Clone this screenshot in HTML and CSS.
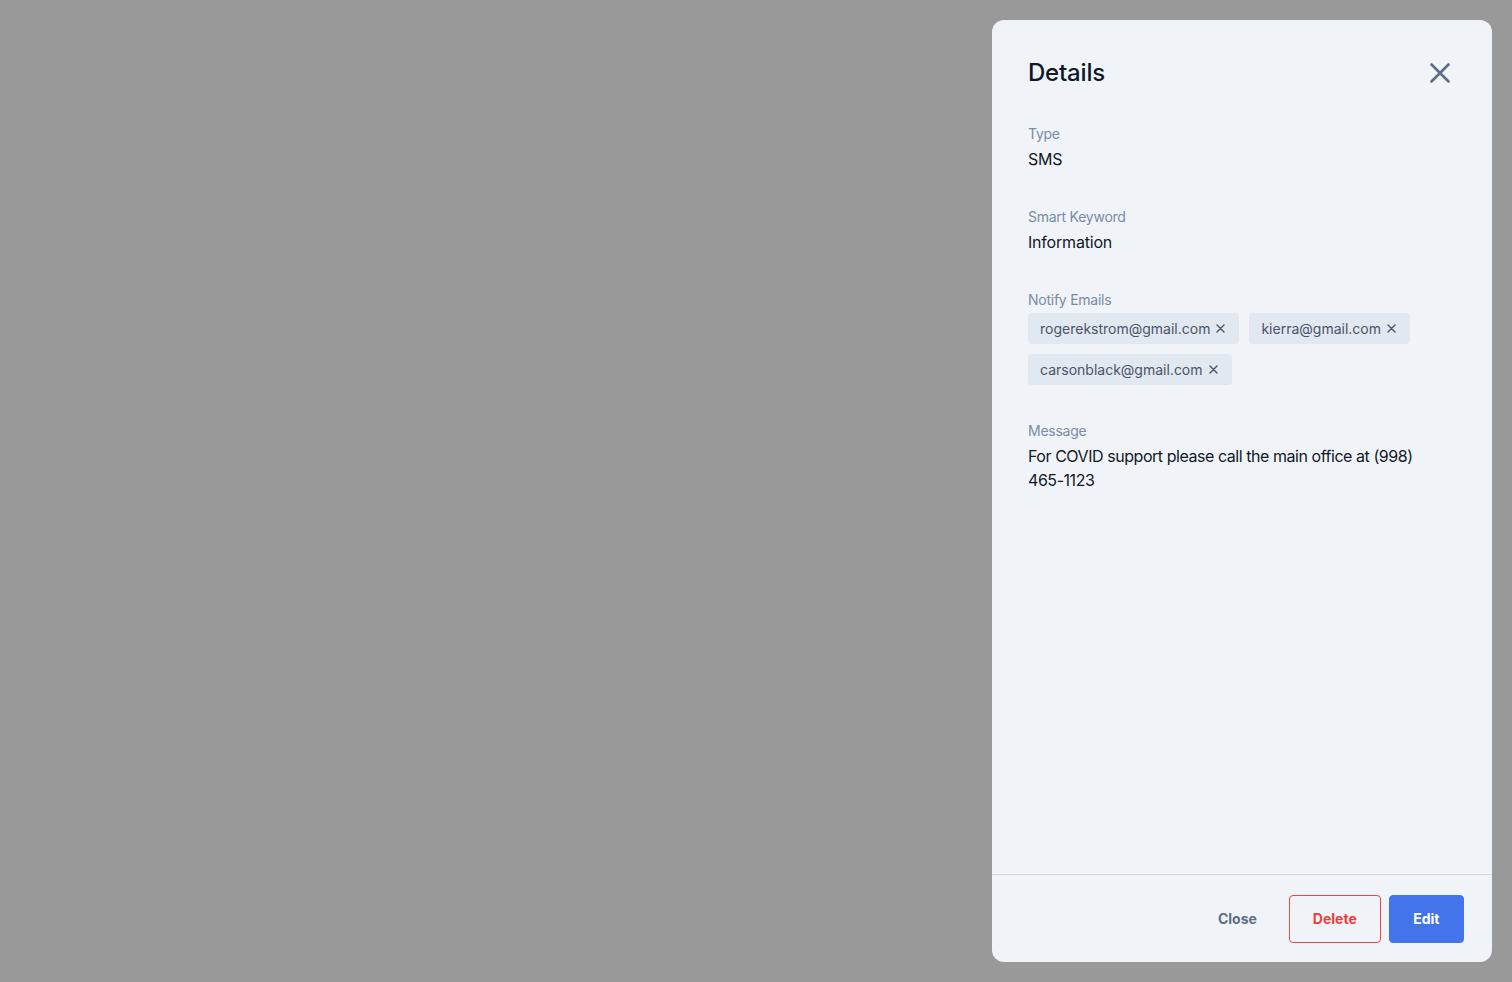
FILE: index.html
```html
<!DOCTYPE html>
<html lang="en">
<head>
<meta charset="utf-8">
<title>Details</title>
<link rel="stylesheet" href="styles.css">
</head>
<body>
<div class="backdrop">
  <aside class="panel">
    <div class="panel-body">
      <header class="panel-header">
        <h1 class="title">Details</h1>
        <button class="icon-btn" aria-label="Close">
          <svg width="20" height="20" viewBox="0 0 20 20" fill="none" stroke="currentColor" stroke-width="2.6" stroke-linecap="round"><path d="M1.5 1.5 18.5 18.5M18.5 1.5 1.5 18.5"/></svg>
        </button>
      </header>
      <section class="field">
        <div class="label">Type</div>
        <div class="value">SMS</div>
      </section>
      <section class="field">
        <div class="label">Smart Keyword</div>
        <div class="value">Information</div>
      </section>
      <section class="field">
        <div class="label">Notify Emails</div>
        <div class="chips">
          <span class="chip">rogerekstrom@gmail.com<svg class="chip-x" width="9" height="9" viewBox="0 0 9 9" fill="none" stroke="currentColor" stroke-width="1.4" stroke-linecap="round"><path d="M1 1 8 8M8 1 1 8"/></svg></span>
          <span class="chip">kierra@gmail.com<svg class="chip-x" width="9" height="9" viewBox="0 0 9 9" fill="none" stroke="currentColor" stroke-width="1.4" stroke-linecap="round"><path d="M1 1 8 8M8 1 1 8"/></svg></span>
          <span class="chip">carsonblack@gmail.com<svg class="chip-x" width="9" height="9" viewBox="0 0 9 9" fill="none" stroke="currentColor" stroke-width="1.4" stroke-linecap="round"><path d="M1 1 8 8M8 1 1 8"/></svg></span>
        </div>
      </section>
      <section class="field">
        <div class="label">Message</div>
        <div class="value message">For COVID support please call the main office at (998) <span class="nowrap">465-1123</span></div>
      </section>
    </div>
    <footer class="panel-footer">
      <button class="btn btn-plain">Close</button>
      <button class="btn btn-danger">Delete</button>
      <button class="btn btn-primary">Edit</button>
    </footer>
  </aside>
</div>
</body>
</html>
```

FILE: styles.css
```css
* { box-sizing: border-box; }
html, body { margin: 0; padding: 0; height: 100%; }
body {
  font-family: Inter, "Noto Sans", sans-serif;
  background: #999999;
}
.backdrop {
  height: 982px;
  display: flex;
  justify-content: flex-end;
  padding: 20px;
}
.panel {
  width: 500px;
  height: 942px;
  background: #f0f4f9;
  border-radius: 12px;
  display: flex;
  flex-direction: column;
}
.panel-body {
  flex: 1;
  padding: 37px 36px 0 36px;
  display: flex;
  flex-direction: column;
  gap: 36px;
}
.panel-header {
  display: flex;
  align-items: center;
  justify-content: space-between;
  height: 32px;
  margin-bottom: -1px;
}
.title {
  margin: 0;
  font-size: 24px;
  line-height: 32px;
  font-weight: 500;
  color: #0f172a;
  letter-spacing: -0.2px;
}
.icon-btn {
  border: 0;
  background: none;
  padding: 0;
  width: 20px;
  height: 20px;
  margin-right: 6px;
  color: #5e6e84;
  cursor: pointer;
  display: flex;
}
.field {
  display: flex;
  flex-direction: column;
  gap: 3px;
}
.label {
  font-size: 14px;
  line-height: 20px;
  color: #7b8aa1;
  letter-spacing: -0.25px;
}
.value {
  font-size: 16px;
  line-height: 24px;
  color: #111827;
  letter-spacing: -0.2px;
}
.message {
  letter-spacing: -0.45px;
}
.nowrap { white-space: nowrap; }
.chips {
  display: flex;
  flex-wrap: wrap;
  gap: 10px;
}
.chip {
  display: inline-flex;
  align-items: center;
  gap: 6px;
  height: 31px;
  padding: 0 14px 0 12px;
  border-radius: 4px;
  background: #e1e8f0;
  color: #4a5568;
  font-size: 14px;
}
.chip-x { color: #4a5568; }
.panel-footer {
  height: 88px;
  border-top: 1px solid #cfd8e3;
  display: flex;
  align-items: center;
  justify-content: flex-end;
  gap: 8px;
  padding: 0 28px;
}
.btn {
  font-family: inherit;
  font-size: 14px;
  font-weight: 700;
  height: 48px;
  padding: 0 23px;
  border-radius: 4px;
  border: 1px solid transparent;
  background: none;
  cursor: pointer;
}
.btn-plain { color: #5e6e84; }
.btn-danger { color: #ef3b3b; border-color: #ef4444; }
.btn-primary { background: #4474ec; color: #ffffff; border-color: #4474ec; padding: 0 23.5px; }
```
